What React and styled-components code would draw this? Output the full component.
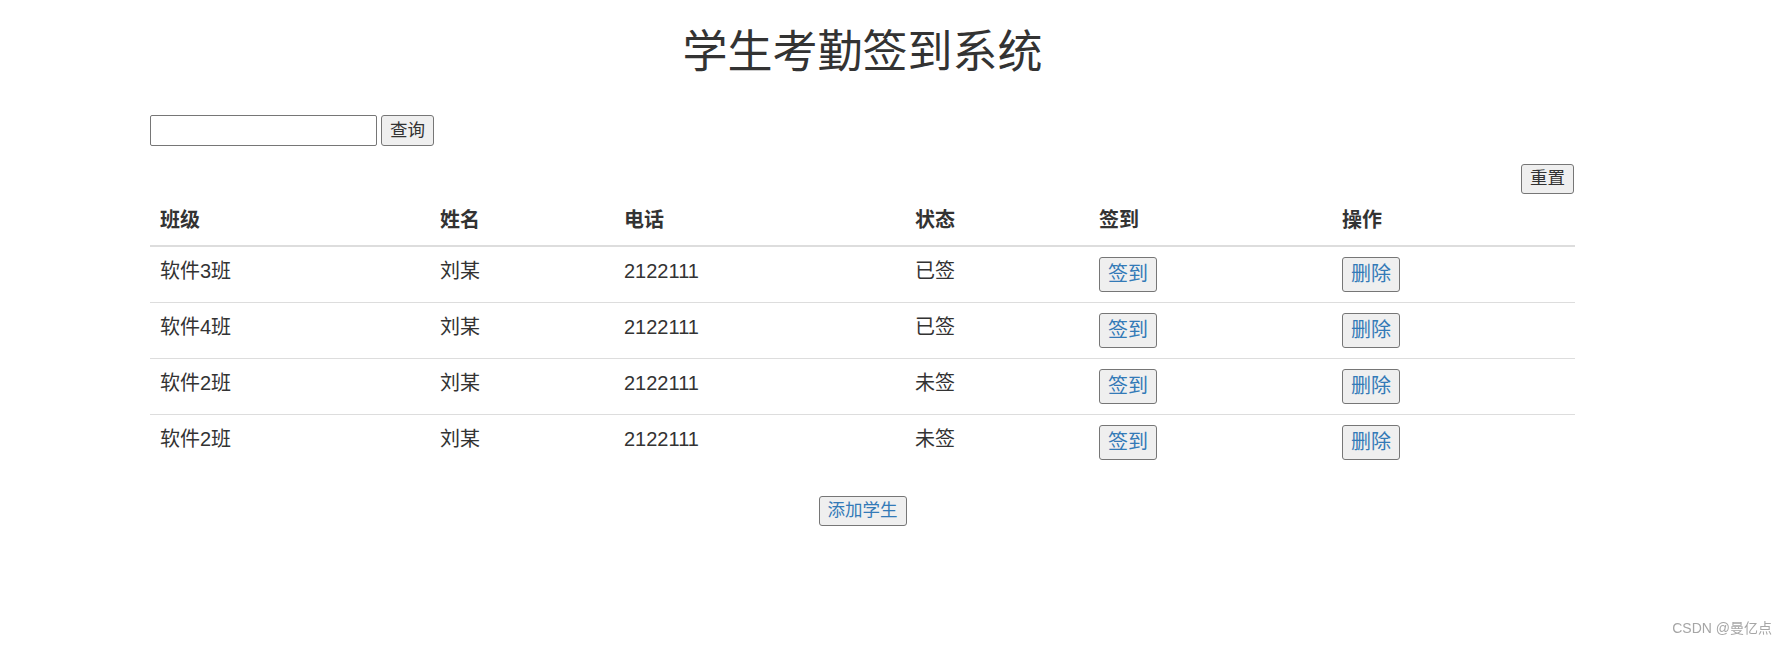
import React from "react";
import styled, { createGlobalStyle } from "styled-components";

const GlobalStyle = createGlobalStyle`
  html, body {
    margin: 0;
    padding: 0;
    background: #ffffff;
  }
  body {
    font-family: "Liberation Sans", "Noto Sans CJK SC", sans-serif;
    color: #333333;
    font-size: 20px;
    line-height: 28.5px;
  }
  * { box-sizing: border-box; }
`;

const Page = styled.div`
  padding-left: 150px;
`;

const Container = styled.div`
  width: 1425px;
  display: flex;
  flex-direction: column;
`;

const Title = styled.h1`
  margin: 28px 0 9.5px;
  font-size: 45px;
  line-height: 49.5px;
  font-weight: 400;
  text-align: center;
  color: #333333;
`;

const SearchBar = styled.div`
  display: flex;
  gap: 4px;
  margin-top: 28px;
  height: 31px;
`;

const SearchInput = styled.input`
  width: 227px;
  height: 31px;
  border: 1px solid #767676;
  border-radius: 2px;
  padding: 1px 3px;
  font-size: 17.5px;
  font-family: inherit;
  background: #fff;
`;

const Button = styled.button`
  height: ${(p) => (p.$large ? "35px" : p.$tall ? "31px" : "30px")};
  padding: 0 8px;
  border: 1px solid #767676;
  border-radius: 3px;
  background: #efefef;
  font-family: "Liberation Sans", "Noto Sans CJK SC", sans-serif;
  font-size: ${(p) => (p.$large ? "20px" : "17.5px")};
  font-weight: 400;
  line-height: 1;
  color: ${(p) => (p.$link ? "#337ab7" : "#333333")};
  cursor: pointer;
  display: inline-flex;
  align-items: center;
  justify-content: center;
`;

const Toolbar = styled.div`
  display: flex;
  justify-content: flex-end;
  margin-top: 18px;
  padding-right: 1px;
`;

const Table = styled.table`
  width: 1425px;
  margin-top: 2px;
  border-collapse: collapse;
  border-spacing: 0;
  table-layout: fixed;
`;

const HeadCell = styled.th`
  width: ${(p) => p.$w}px;
  padding: 10px;
  text-align: left;
  vertical-align: bottom;
  font-weight: 700;
  line-height: 28.5px;
  border-bottom: 2px solid #dddddd;
`;

const Row = styled.tr`
  & + & td {
    border-top: 1px solid #dddddd;
  }
`;

const Cell = styled.td`
  padding: 10px;
  vertical-align: top;
  line-height: 28.5px;
  height: 55px;
`;

const Footer = styled.div`
  display: flex;
  justify-content: center;
  margin-top: 26px;
`;

const Watermark = styled.div`
  position: fixed;
  right: 15px;
  bottom: 8px;
  font-size: 14px;
  line-height: 20px;
  color: #a6a6a6;
  font-family: "Liberation Sans", "Noto Sans CJK SC", sans-serif;
`;

const columns = [
  { label: "班级", w: 280 },
  { label: "姓名", w: 184 },
  { label: "电话", w: 291 },
  { label: "状态", w: 184 },
  { label: "签到", w: 243 },
  { label: "操作", w: 243 },
];

const students = [
  { cls: "软件3班", name: "刘某", phone: "2122111", status: "已签" },
  { cls: "软件4班", name: "刘某", phone: "2122111", status: "已签" },
  { cls: "软件2班", name: "刘某", phone: "2122111", status: "未签" },
  { cls: "软件2班", name: "刘某", phone: "2122111", status: "未签" },
];

export default function App() {
  return (
    <>
      <GlobalStyle />
      <Page>
        <Container>
          <Title>学生考勤签到系统</Title>
          <SearchBar>
            <SearchInput type="text" />
            <Button $tall>查询</Button>
          </SearchBar>
          <Toolbar>
            <Button>重置</Button>
          </Toolbar>
          <Table>
            <thead>
              <tr>
                {columns.map((c) => (
                  <HeadCell key={c.label} $w={c.w}>
                    {c.label}
                  </HeadCell>
                ))}
              </tr>
            </thead>
            <tbody>
              {students.map((s, i) => (
                <Row key={i}>
                  <Cell>{s.cls}</Cell>
                  <Cell>{s.name}</Cell>
                  <Cell>{s.phone}</Cell>
                  <Cell>{s.status}</Cell>
                  <Cell>
                    <Button $large $link>签到</Button>
                  </Cell>
                  <Cell>
                    <Button $large $link>删除</Button>
                  </Cell>
                </Row>
              ))}
            </tbody>
          </Table>
          <Footer>
            <Button $link>添加学生</Button>
          </Footer>
        </Container>
      </Page>
      <Watermark>CSDN @曼亿点</Watermark>
    </>
  );
}
